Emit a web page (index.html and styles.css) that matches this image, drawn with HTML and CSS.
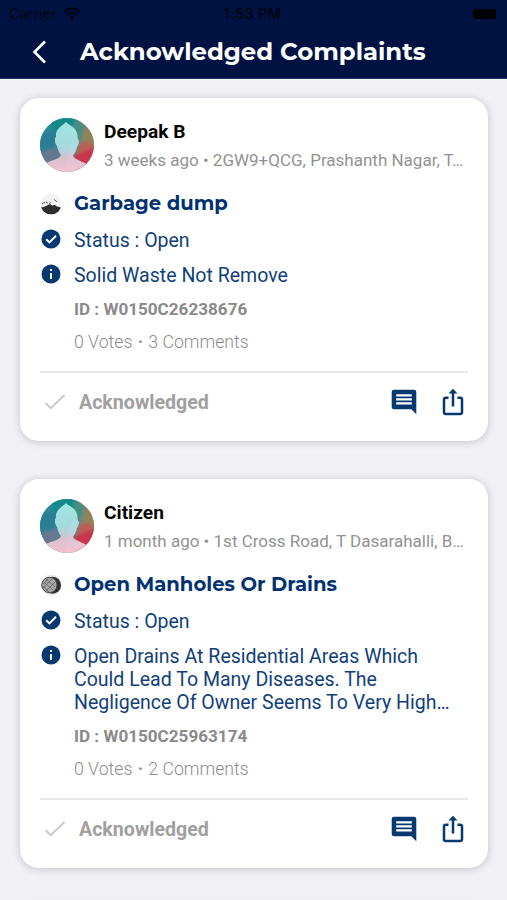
FILE: index.html
```html
<!DOCTYPE html>
<html lang="en">
<head>
<meta charset="utf-8">
<title>Acknowledged Complaints</title>
<link rel="stylesheet" href="styles.css">
</head>
<body>
<svg class="defs" width="0" height="0" aria-hidden="true">
  <defs>
    <linearGradient id="warm" x1="0" y1=".55" x2="1" y2=".5"><stop offset="0" stop-color="#23899a"/><stop offset=".5" stop-color="#3f8f94"/><stop offset=".78" stop-color="#7c8273"/><stop offset="1" stop-color="#b5705a"/></linearGradient>
    <linearGradient id="skin" x1="0" y1="0" x2="0" y2="1"><stop offset="0" stop-color="#9fe5e2"/><stop offset=".5" stop-color="#a5d9de"/><stop offset=".72" stop-color="#d9c2cf"/><stop offset="1" stop-color="#f5c0cf"/></linearGradient>
    <clipPath id="round"><circle cx="27" cy="27" r="27"/></clipPath>
    <clipPath id="small"><circle cx="11" cy="11" r="10.5"/></clipPath>
    <filter id="blend" x="-10%" y="-10%" width="120%" height="120%"><feGaussianBlur stdDeviation="1.6"/></filter>
  </defs>
  <symbol id="avatar" viewBox="0 0 54 54">
    <g clip-path="url(#round)">
      <path fill="url(#warm)" d="M0 0h54v54H0z"/>
      <g filter="url(#blend)">
        <path fill="#128a8b" d="M6-3h34l-6 12-19 8z"/>
        <path fill="#438f86" d="M36 1l10 8-6 13-10-9z"/>
        <path fill="#2c7f94" d="M-3 15l20-2-2 17-18 6z"/>
        <path fill="#667890" d="M-3 36l19-7 6 10-20 12z"/>
        <path fill="#8d8459" d="M43 10l10 4 4 14-14-4z"/>
        <path fill="#b85e56" d="M39 26l8-3 10 7-4 8-16-2z"/>
        <path fill="#c83550" d="M34 37l23-8v24H36z"/>
      </g>
      <path fill="url(#skin)" d="M26 4c2 3 9 4 11 11 1 4 0 6 2 8 0 3-1 5-2 6-1 5-3 7-4 9 1 4 13 6 16 10v6H6v-9c6-3 14-4 15-8-2-2-3-5-4-9-2-2-3-8-1-9-1-8 5-10 10-15z"/>
      <path fill="#fff" opacity=".08" d="M26 4l10 10-8 18-1 22 18-9-12-7 6-15z"/>
    </g>
  </symbol>
  <symbol id="dump" viewBox="0 0 22 22">
    <g clip-path="url(#small)">
      <path fill="#f2f2f2" d="M0 0h22v22H0z"/>
      <path fill="#2e2e2e" d="M1 14.500l4-1 3-1.500 2-1 2 1.500 3-.5 2 1.500 4 1v1c-1 4-5 6-10 6S2 18.500 1 14.500z"/>
      <path stroke="#555" stroke-width=".9" fill="none" d="M2 10.500l3-1M6 9l2 1.500M14 6.500l2 1.500 1 1M9 10.500l2-1"/>
    </g>
  </symbol>
  <symbol id="manhole" viewBox="0 0 22 22">
    <circle cx="11" cy="11" r="10.5" fill="#e9e9e9"/>
    <circle cx="12.5" cy="11.3" r="8.500" fill="#303030"/>
    <ellipse cx="9.4" cy="11" rx="7.6" ry="7.7" fill="#a5a5a5" stroke="#4a4a4a"/>
    <path stroke="#666" stroke-width=".8" fill="none" d="M4 8l9 8M6 5l9 8M3 12l6 6M3 14l9-9M6 17l9-9M3 10l5-5"/>
  </symbol>
  <symbol id="verified" viewBox="0 0 20 20"><circle cx="10" cy="10" r="9.5" fill="#063970"/><path d="M5.2 10.2l3.2 3.2 6.6-6.7" fill="none" stroke="#fff" stroke-width="2"/></symbol>
  <symbol id="info" viewBox="0 0 20 20"><circle cx="10" cy="10" r="9.5" fill="#063970"/><path d="M9 5h2v2H9zM9 9h2v6H9z" fill="#fff"/></symbol>
  <symbol id="tick" viewBox="0 0 22 18"><path d="M1.5 10l5.2 5.2L20.5 2" fill="none" stroke="#c9c9c9" stroke-width="2"/></symbol>
  <symbol id="comment" viewBox="0 0 26 26"><path fill="#063970" fill-rule="evenodd" d="M3 .8h20q2.300 0 2.300 2.300v22.200l-5-5H3Q.7 20.300.7 18V3.100Q.7.800 3 .8zM5.200 5.200v2.300h15.600V5.200zm0 4v2.300h15.600V9.200zm0 4v2.300h15.600v-2.300z"/></symbol>
  <symbol id="share" viewBox="0 0 22 28"><path d="M6.500 9.800H3.800Q2 9.800 2 11.600v12.600Q2 26 3.800 26h14.400q1.800 0 1.800-1.800V11.600q0-1.800-1.800-1.800h-2.700M11 18.500V4" fill="none" stroke="#063970" stroke-width="2.500"/><path d="M11 .8l4.500 4.800h-9z" fill="#063970"/></symbol>
</svg>

<header class="top">
  <div class="status-bar">
    <span class="carrier">Carrier
      <svg width="18" height="14" viewBox="0 0 18 14"><path d="M1.200 5Q9-2 16.800 5M4 8q5-4.500 10 0" fill="none" stroke="#000514" stroke-width="2.300"/><path d="M6.200 10.300q2.800-2.200 5.600 0L9 13.300z" fill="#000514"/></svg>
    </span>
    <span class="clock">1:53 PM</span>
    <span class="battery"></span>
  </div>
  <div class="nav">
    <svg class="back" width="16" height="24" viewBox="0 0 16 24"><path d="M14 1.500L3.500 12 14 22.500" fill="none" stroke="#fff" stroke-width="2.600"/></svg>
    <h1>Acknowledged Complaints</h1>
  </div>
</header>

<main class="feed">
  <article class="card">
    <div class="person">
      <svg class="avatar"><use href="#avatar"/></svg>
      <div class="who">
        <div class="name">Deepak B</div>
        <div class="meta">3 weeks ago • 2GW9+QCG, Prashanth Nagar, T…</div>
      </div>
    </div>
    <div class="row category"><svg class="thumb"><use href="#dump"/></svg><h2>Garbage dump</h2></div>
    <div class="row state"><svg><use href="#verified"/></svg><span>Status : Open</span></div>
    <div class="row detail"><svg><use href="#info"/></svg><p>Solid Waste Not Remove</p></div>
    <div class="ident">ID : W0150C26238676</div>
    <div class="counts">0 Votes <b>·</b> 3 Comments</div>
    <footer class="actions">
      <svg class="tick"><use href="#tick"/></svg><span class="ack">Acknowledged</span>
      <svg class="comment"><use href="#comment"/></svg><svg class="share"><use href="#share"/></svg>
    </footer>
  </article>

  <article class="card">
    <div class="person">
      <svg class="avatar"><use href="#avatar"/></svg>
      <div class="who">
        <div class="name">Citizen</div>
        <div class="meta">1 month ago • 1st Cross Road, T Dasarahalli, B…</div>
      </div>
    </div>
    <div class="row category"><svg class="thumb"><use href="#manhole"/></svg><h2>Open Manholes Or Drains</h2></div>
    <div class="row state"><svg><use href="#verified"/></svg><span>Status : Open</span></div>
    <div class="row detail"><svg><use href="#info"/></svg><p>Open Drains At Residential Areas Which<br>Could Lead To Many Diseases. The<br>Negligence Of Owner Seems To Very High…</p></div>
    <div class="ident">ID : W0150C25963174</div>
    <div class="counts">0 Votes <b>·</b> 2 Comments</div>
    <footer class="actions">
      <svg class="tick"><use href="#tick"/></svg><span class="ack">Acknowledged</span>
      <svg class="comment"><use href="#comment"/></svg><svg class="share"><use href="#share"/></svg>
    </footer>
  </article>
  <article class="card"></article>
</main>
</body>
</html>
```
FILE: styles.css
```css
* { box-sizing: border-box; }
html, body { height: 100%; }
body { margin: 0; overflow: hidden; background: #f0f0f5; font-family: Roboto, sans-serif; }
.defs { position: absolute; }
h1, h2, p { margin: 0; }
svg { flex: none; }

.top { height: 79px; background: #001242; border-bottom: 1px solid #26376a; }
.status-bar { height: 27px; display: grid; grid-template-columns: 1fr auto 1fr; align-items: center; padding: 0 11px 0 9px; color: #000514; font: 14.5px/27px Inter, sans-serif; }
.carrier { display: flex; align-items: center; gap: 6px; }
.clock { font-weight: 600; font-size: 14.5px; letter-spacing: .3px; }
.battery { justify-self: end; width: 23px; height: 10px; border-radius: 3px; background: #000; }
.nav { height: 50px; display: flex; align-items: center; padding-left: 31px; gap: 33px; }
h1 { color: #fff; font: 700 24.4px/50px Montserrat, Inter, sans-serif; white-space: nowrap; margin-top: -2px; }

.feed { padding: 19px 19px 0 20px; }
.card { padding: 20px 20px 0; margin-bottom: 38px; border-radius: 19px; background: #fff; box-shadow: 0 1px 8px rgba(0, 0, 20, .19); }
.card:empty { height: 200px; }
.person { display: flex; gap: 10px; height: 54px; }
.avatar { width: 54px; height: 54px; }
.who { flex: 1; min-width: 0; }
.name { font-weight: 700; font-size: 19.2px; line-height: 28px; color: #050505; }
.meta { font-size: 17px; line-height: 29px; color: #929292; white-space: nowrap; }
.row { display: flex; gap: 13px; padding-left: 1px; }
.row svg { width: 20px; height: 20px; }
.row .thumb { width: 22px; height: 22px; margin: 0 -1px; }
.category { margin-top: 14px; height: 35px; align-items: center; }
h2 { color: #003173; font: 700 19.6px/35px Montserrat, Inter, sans-serif; white-space: nowrap; }
.state { margin-top: 1px; height: 36px; align-items: center; color: #113f7a; font-size: 19.5px; }
.state svg { position: relative; top: -1px; }
.detail { margin-top: 6px; color: #113f7a; font-size: 19.55px; line-height: 23px; white-space: nowrap; }
.ident { margin: 12px 0 0 34px; color: #8a8a8a; font-weight: 700; font-size: 17.1px; line-height: 20px; }
.counts { margin: 13px 0 0 34px; color: #8c8c8c; font-weight: 300; font-size: 17.7px; line-height: 20px; }
.counts b { font-weight: 700; margin: 0 1px; }
.actions { margin-top: 19px; border-top: 2px solid #e9e9eb; height: 70px; display: flex; align-items: center; padding: 0 4px 10px 4px; }
.tick { width: 22px; height: 18px; }
.ack { flex: 1; margin-left: 13px; color: #a0a0a0; font-weight: 700; font-size: 19.6px; }
.comment { width: 26px; height: 26px; margin-right: 25px; }
.share { width: 22px; height: 28px; }
```
